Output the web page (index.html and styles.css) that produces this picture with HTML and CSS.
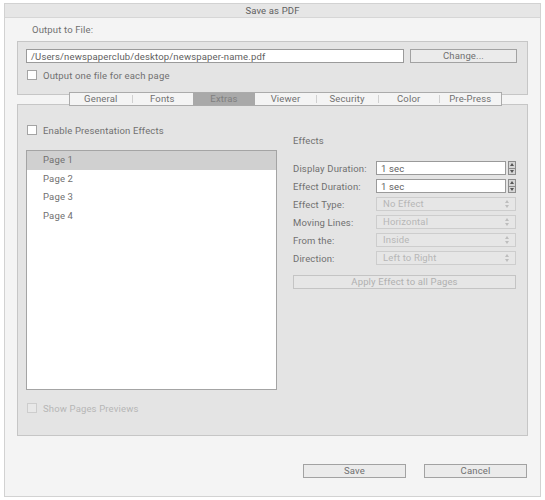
FILE: index.html
```html
<html>
    <head>
        <title>Save as PDF</title>
        <link rel="stylesheet" href="styles.css">
    </head>
    <body>
        <div class="window">
            <div class="titlebar">Save as PDF</div>
            <div class="content">
                <div class="section-label">Output to File:</div>
                <div class="group">
                    <div class="path-row">
                        <div class="field path">/Users/newspaperclub/desktop/newspaper-name.pdf</div>
                        <div class="button change">Change...</div>
                    </div>
                    <div class="check-row out-row">
                        <span class="checkbox"></span>
                        <span>Output one file for each page</span>
                    </div>
                </div>

                <div class="tabs">
                    <div class="tab">General</div>
                    <div class="tab">Fonts</div>
                    <div class="tab active">Extras</div>
                    <div class="tab">Viewer</div>
                    <div class="tab">Security</div>
                    <div class="tab">Color</div>
                    <div class="tab">Pre-Press</div>
                </div>

                <div class="panel">
                    <div class="col-left">
                        <div class="check-row">
                            <span class="checkbox"></span>
                            <span>Enable Presentation Effects</span>
                        </div>
                        <div class="page-list">
                            <div class="page-item selected">Page 1</div>
                            <div class="page-item">Page 2</div>
                            <div class="page-item">Page 3</div>
                            <div class="page-item">Page 4</div>
                        </div>
                        <div class="check-row previews disabled">
                            <span class="checkbox"></span>
                            <span>Show Pages Previews</span>
                        </div>
                    </div>

                    <div class="col-right">
                        <div class="effects-title">Effects</div>
                        <div class="form-row">
                            <div class="label">Display Duration:</div>
                            <div class="field num">1 sec</div>
                            <div class="spinner"><span class="up"></span><span class="down"></span></div>
                        </div>
                        <div class="form-row">
                            <div class="label">Effect Duration:</div>
                            <div class="field num">1 sec</div>
                            <div class="spinner"><span class="up"></span><span class="down"></span></div>
                        </div>
                        <div class="form-row">
                            <div class="label">Effect Type:</div>
                            <div class="select">No Effect<span class="arrows"></span></div>
                        </div>
                        <div class="form-row">
                            <div class="label">Moving Lines:</div>
                            <div class="select">Horizontal<span class="arrows"></span></div>
                        </div>
                        <div class="form-row">
                            <div class="label">From the:</div>
                            <div class="select">Inside<span class="arrows"></span></div>
                        </div>
                        <div class="form-row">
                            <div class="label">Direction:</div>
                            <div class="select">Left to Right<span class="arrows"></span></div>
                        </div>
                        <div class="button apply">Apply Effect to all Pages</div>
                    </div>
                </div>

                <div class="footer">
                    <div class="button footer-btn">Save</div>
                    <div class="button footer-btn">Cancel</div>
                </div>
            </div>
        </div>
    </body>
</html>
```

FILE: styles.css
```css
body {
    margin: 0;
    background-color: #ffffff;
    font-family: "Roboto", "Liberation Sans", sans-serif;
    font-size: 9.5px;
    letter-spacing: 0.15px;
    color: #707070;
}
.window {
    margin: 3px 0 0 4px;
    width: 535px;
    height: 492px;
    border: 1px solid #d2d2d2;
    background-color: #f4f4f4;
}
.titlebar {
    height: 13px;
    line-height: 13px;
    text-align: center;
    background-color: #e6e6e6;
    border-bottom: 1px solid #d6d6d6;
    color: #606060;
}
.content {
    padding: 0 12px;
}
.section-label {
    height: 23px;
    line-height: 23px;
    padding-left: 15px;
}
.group {
    border: 1px solid #c6c6c6;
    background-color: #e4e4e4;
    padding: 7px 9px 0 8px;
    box-sizing: border-box;
    height: 54px;
}
.path-row {
    display: flex;
    gap: 6px;
}
.field {
    height: 14px;
    line-height: 13px;
    box-sizing: border-box;
    border: 1px solid #9a9a9a;
    background-color: #ffffff;
    color: #606060;
}
.path {
    width: 378px;
    padding-left: 4px;
}
.button {
    height: 14px;
    line-height: 12px;
    box-sizing: border-box;
    border: 1px solid #a2a2a2;
    background-color: #ebebeb;
    text-align: center;
    color: #707070;
}
.change {
    width: 107px;
}
.check-row {
    display: flex;
    align-items: center;
    height: 10px;
    gap: 6px;
}
.out-row {
    margin-top: 7px;
    margin-left: 1px;
}
.checkbox {
    width: 10px;
    height: 10px;
    box-sizing: border-box;
    border: 1px solid #a4a4a4;
    background-color: #ffffff;
}
.tabs {
    position: relative;
    z-index: 1;
    display: flex;
    margin: -3px 0 -2px 52px;
    width: 433px;
    height: 14px;
    box-sizing: border-box;
    border: 1px solid #ababab;
    background-color: #f4f4f4;
}
.tab {
    flex: 1;
    text-align: center;
    line-height: 12px;
    color: #707070;
    position: relative;
}
.tab + .tab::before {
    content: "";
    position: absolute;
    left: 0;
    top: 2px;
    height: 8px;
    border-left: 1px solid #d0d0d0;
}
.tab.active {
    background-color: #a9a9a9;
    color: #808080;
}
.tab.active::before,
.tab.active + .tab::before {
    display: none;
}
.panel {
    height: 332px;
    box-sizing: border-box;
    border: 1px solid #c6c6c6;
    background-color: #e4e4e4;
    display: flex;
    gap: 16px;
    padding: 20px 10px 0 8px;
}
.col-left {
    width: 251px;
    padding-left: 1px;
    box-sizing: border-box;
}
.page-list {
    margin: 15px 0 0 -1px;
    width: 251px;
    height: 240px;
    box-sizing: border-box;
    border: 1px solid #a4a4a4;
    background-color: #ffffff;
}
.page-item {
    height: 18.6px;
    line-height: 18.6px;
    padding-left: 16px;
}
.page-item.selected {
    background-color: #d0d0d0;
}
.previews {
    margin-top: 13px;
}
.disabled {
    color: #b6b6b6;
}
.disabled .checkbox {
    border-color: #cdcdcd;
    background-color: #e8e8e8;
}
.col-right {
    flex: 1;
}
.effects-title {
    margin-top: 10px;
    height: 12px;
    line-height: 12px;
    margin-bottom: 14px;
}
.form-row {
    display: flex;
    align-items: center;
    height: 14px;
    margin-bottom: 4px;
}
.label {
    width: 83px;
}
.num {
    width: 130px;
    padding-left: 4px;
}
.spinner {
    margin-left: 2px;
    width: 8px;
    height: 14px;
    box-sizing: border-box;
    border: 1px solid #8c8c8c;
    background-color: #d6d6d6;
    display: flex;
    flex-direction: column;
}
.spinner span {
    flex: 1;
    display: flex;
    align-items: center;
    justify-content: center;
}
.spinner .up {
    border-bottom: 1px solid #8c8c8c;
}
.spinner .up::after {
    content: "";
    border-left: 2px solid transparent;
    border-right: 2px solid transparent;
    border-bottom: 3px solid #555555;
}
.spinner .down::after {
    content: "";
    border-left: 2px solid transparent;
    border-right: 2px solid transparent;
    border-top: 3px solid #555555;
}
.select {
    position: relative;
    width: 140px;
    height: 14px;
    line-height: 12px;
    box-sizing: border-box;
    border: 1px solid #cdcdcd;
    background-color: #e6e6e6;
    padding-left: 6px;
    color: #b6b6b6;
}
.arrows {
    position: absolute;
    right: 6px;
    top: 2px;
    width: 4px;
    height: 8px;
}
.arrows::before {
    content: "";
    position: absolute;
    top: 0;
    left: 0;
    border-left: 2px solid transparent;
    border-right: 2px solid transparent;
    border-bottom: 3px solid #bdbdbd;
}
.arrows::after {
    content: "";
    position: absolute;
    bottom: 0;
    left: 0;
    border-left: 2px solid transparent;
    border-right: 2px solid transparent;
    border-top: 3px solid #bdbdbd;
}
.apply {
    margin-top: 10px;
    width: 223px;
    border-color: #c4c4c4;
    background-color: #e6e6e6;
    color: #b0b0b0;
}
.footer {
    display: flex;
    justify-content: flex-end;
    gap: 18px;
    margin-top: 28px;
    padding-right: 1px;
}
.footer-btn {
    width: 103px;
}
```
